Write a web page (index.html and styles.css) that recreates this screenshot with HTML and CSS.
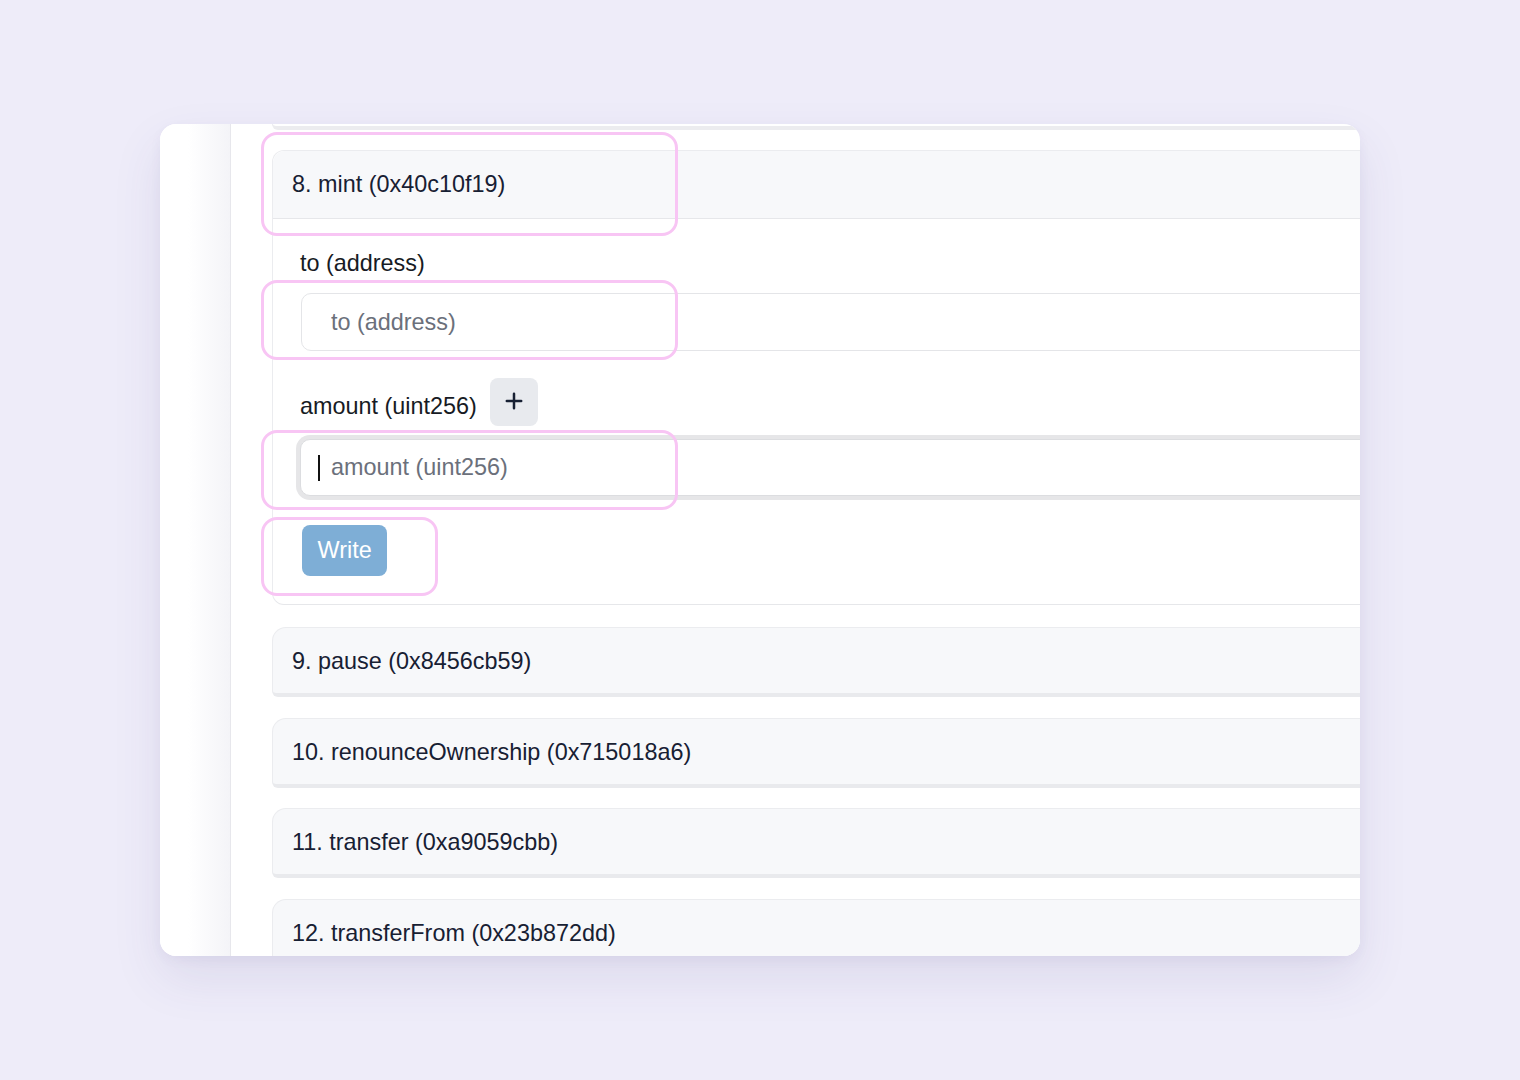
FILE: index.html
```html
<!DOCTYPE html>
<html lang="en">
<head>
<meta charset="utf-8">
<title>Contract functions</title>
<link rel="stylesheet" href="styles.css">
</head>
<body>
<div class="stage">
  <div class="card">
    <aside class="sidebar"></aside>
    <main class="content">
      <div class="prev-tail"></div>

      <section class="fn fn-open">
        <div class="fn-head">8. mint (0x40c10f19)</div>
        <div class="fn-body">
          <div class="field">
            <div class="label-row"><span class="label">to (address)</span></div>
            <input class="input" type="text" placeholder="to (address)">
          </div>
          <div class="field">
            <div class="label-row">
              <span class="label">amount (uint256)</span>
              <button class="add-btn" type="button" aria-label="add">
                <svg width="20" height="20" viewBox="0 0 20 20"><path d="M10 2.8v14.4M2.8 10h14.4" stroke="#172033" stroke-width="2.5" stroke-linecap="round" fill="none"/></svg>
              </button>
            </div>
            <div class="input-focus">
              <span class="caret"></span>
              <input class="input-bare" type="text" placeholder="amount (uint256)">
            </div>
          </div>
          <button class="write-btn" type="button">Write</button>
        </div>
      </section>

      <section class="fn"><div class="fn-head">9. pause (0x8456cb59)</div></section>
      <section class="fn"><div class="fn-head">10. renounceOwnership (0x715018a6)</div></section>
      <section class="fn"><div class="fn-head">11. transfer (0xa9059cbb)</div></section>
      <section class="fn"><div class="fn-head">12. transferFrom (0x23b872dd)</div></section>
    </main>

    <div class="mark mark-head"></div>
    <div class="mark mark-in1"></div>
    <div class="mark mark-in2"></div>
    <div class="mark mark-btn"></div>
  </div>
</div>
</body>
</html>
```

FILE: styles.css
```css
* { box-sizing: border-box; }

html, body {
  margin: 0;
  padding: 0;
  background: #eeecf9;
  font-family: "Liberation Sans", Arial, Helvetica, sans-serif;
}

.stage {
  padding: 124px 160px 124px 160px;
}

.card {
  position: relative;
  width: 1200px;
  height: 832px;
  background: #ffffff;
  border-radius: 16px;
  overflow: hidden;
  display: flex;
  box-shadow: 0 22px 50px rgba(70, 60, 130, 0.10), 0 4px 12px rgba(70, 60, 130, 0.05);
}

.sidebar {
  width: 71px;
  flex: 0 0 71px;
  background: linear-gradient(to right, #ffffff 40%, #f4f4f8 100%);
  border-right: 1px solid #e7e7ec;
}

.content {
  flex: 1;
  min-width: 0;
  padding-left: 41px;
  display: flex;
  flex-direction: column;
}

.prev-tail {
  width: 1300px;
  height: 6px;
  border-left: 1px solid #ececf0;
  border-bottom: 4px solid #ececef;
  border-bottom-left-radius: 12px;
  flex: 0 0 auto;
}

.fn {
  width: 1300px;
  flex: 0 0 auto;
  margin-top: 20.5px;
  border: 1px solid #ebecef;
  border-bottom: 4px solid #e9eaed;
  border-radius: 14px 14px 6px 6px;
  background: #f7f8fa;
  color: #172033;
  font-size: 23.4px;
}

.fn-head {
  height: 65px;
  display: flex;
  align-items: center;
  padding-left: 19px;
  padding-top: 3px;
  line-height: 1;
}

.fn-open {
  margin-top: 20px;
  border-bottom: 1px solid #e6e7ea;
  border-radius: 12px;
  background: #ffffff;
  margin-bottom: 1.5px;
}

.fn-open .fn-head {
  height: 68px;
  padding-top: 1px;
  background: #f7f8fa;
  border-bottom: 1px solid #e6e7ea;
  border-radius: 12px 12px 0 0;
}

.fn-body {
  padding: 27px 0 28px 27px;
  display: flex;
  flex-direction: column;
  align-items: flex-start;
}

.field {
  display: flex;
  flex-direction: column;
  align-items: flex-start;
  width: 100%;
  margin-bottom: 27px;
}

.field + .field { margin-bottom: 29px; }

.label-row {
  display: flex;
  align-items: center;
  gap: 13px;
  margin-bottom: 12px;
}

.label {
  font-size: 23.4px;
  line-height: 35px;
  color: #171b24;
}

.field + .field .label { margin-top: 8px; }
.field + .field .label-row { margin-bottom: 13px; }

.add-btn {
  width: 48px;
  height: 48px;
  border: 0;
  border-radius: 8px;
  background: #e8eaee;
  display: flex;
  align-items: center;
  justify-content: center;
  padding: 0 0 3px 0;
}

.input {
  margin-left: 1px;
  width: 1300px;
  height: 58px;
  border: 1px solid #e4e5e8;
  border-radius: 10px;
  padding: 0 0 0 29px;
  font-family: "Liberation Sans", Arial, Helvetica, sans-serif;
  font-size: 23.4px;
  color: #171b24;
  background: #fff;
  outline: none;
}

.input::placeholder, .input-bare::placeholder {
  color: #6b707b;
  opacity: 1;
}

.input-focus {
  width: 1300px;
  height: 57px;
  border: 1px solid #dcdde0;
  border-radius: 10px;
  box-shadow: 0 0 0 4px #e6e6e8;
  background: #fff;
  display: flex;
  align-items: center;
  padding-left: 17px;
}

.caret {
  width: 2px;
  height: 26px;
  background: #111;
  flex: 0 0 auto;
}

.input-bare {
  flex: 1;
  border: 0;
  outline: none;
  background: transparent;
  padding: 0 0 0 11px;
  font-family: "Liberation Sans", Arial, Helvetica, sans-serif;
  font-size: 23.4px;
  color: #171b24;
}

.write-btn {
  margin-left: 2px;
  height: 51px;
  padding: 0 15.5px;
  border: 0;
  border-radius: 8px;
  background: #7eaed6;
  color: #ffffff;
  font-family: "Liberation Sans", Arial, Helvetica, sans-serif;
  font-size: 23.4px;
}

.mark {
  position: absolute;
  border: 3px solid #f8c5f4;
  border-radius: 16px;
  pointer-events: none;
}

.mark-head { left: 101px; top: 8px;   width: 417px; height: 104px; }
.mark-in1  { left: 101px; top: 156px; width: 417px; height: 80px; }
.mark-in2  { left: 101px; top: 306px; width: 417px; height: 80px; }
.mark-btn  { left: 101px; top: 393px; width: 177px; height: 79px; }
```
